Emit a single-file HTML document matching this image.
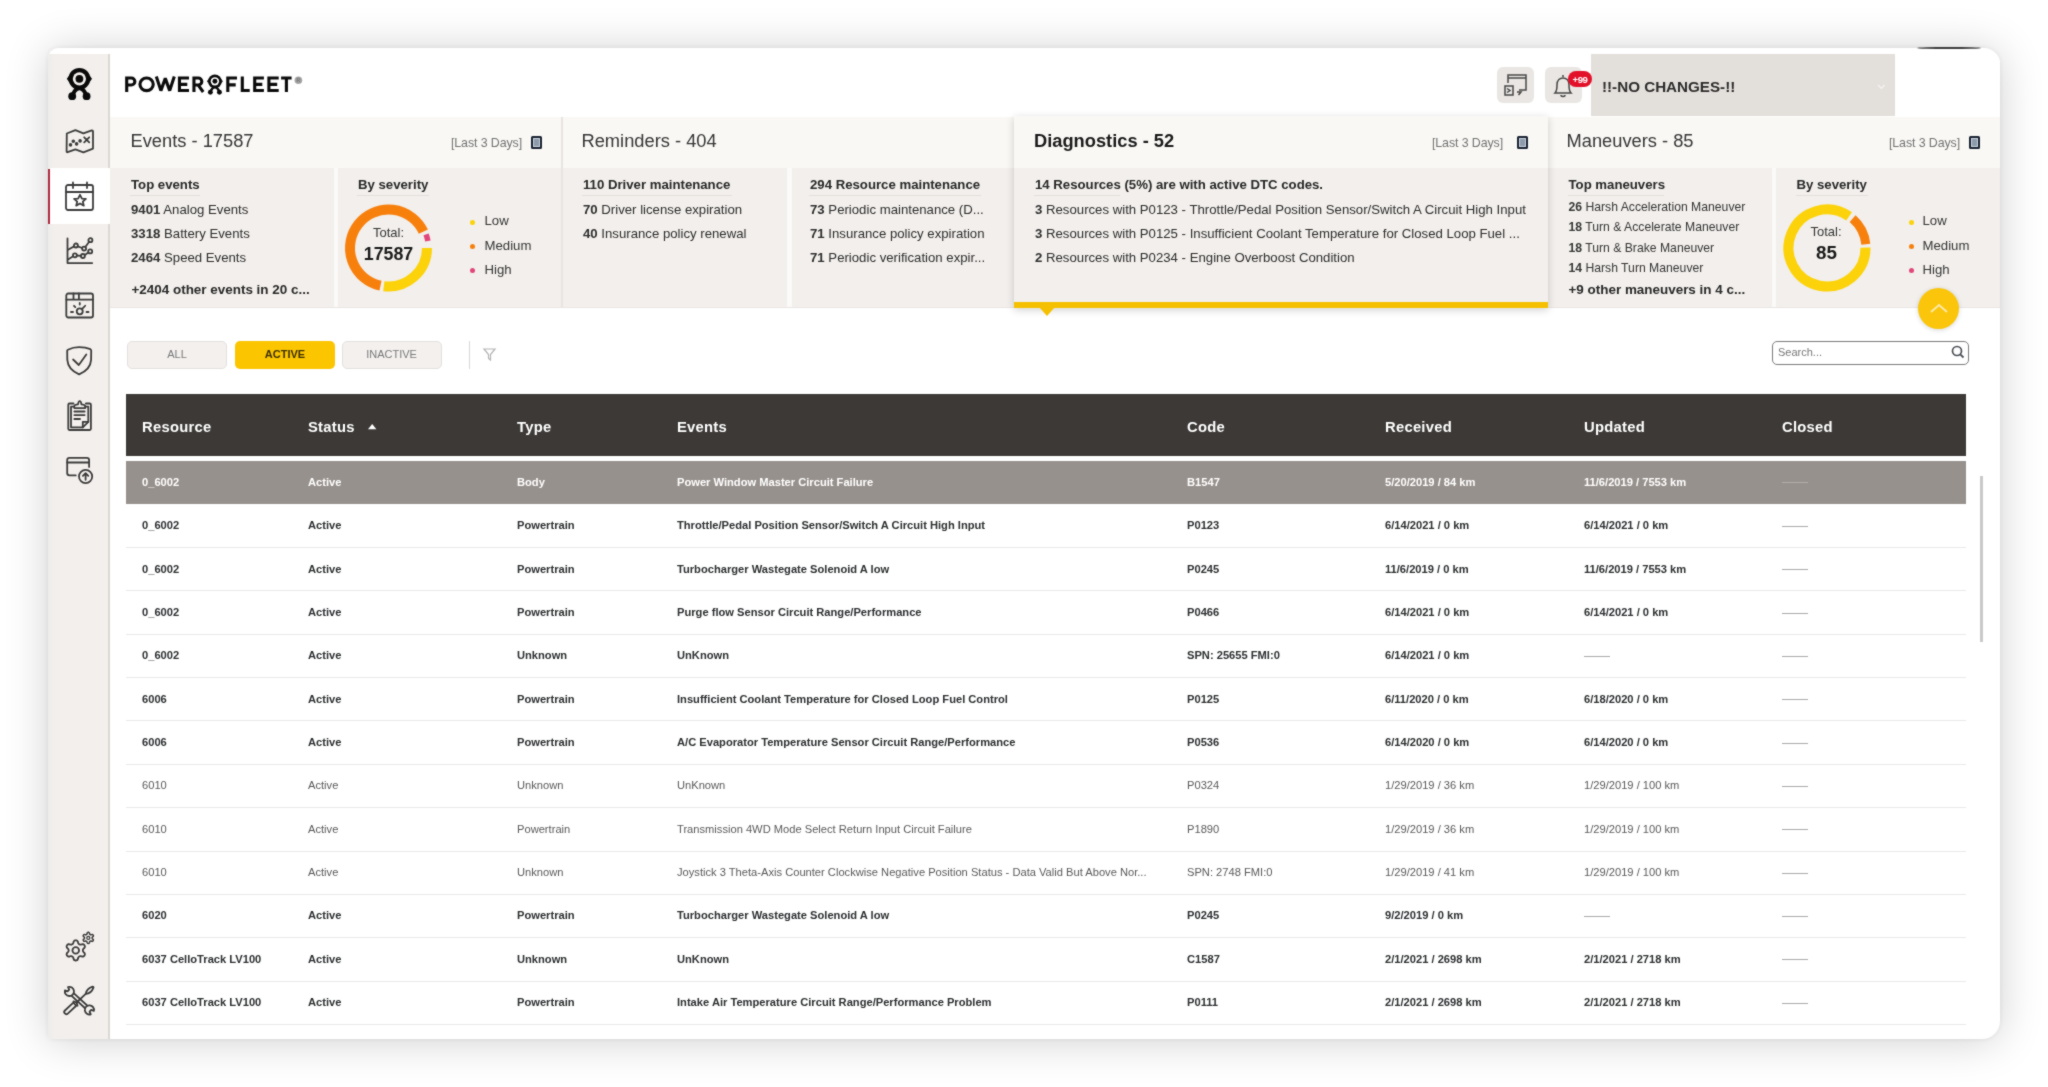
<!DOCTYPE html><html><head><meta charset="utf-8"><style>
html,body{margin:0;padding:0;}
body{width:2048px;height:1087px;overflow:hidden;background:#fff;position:relative;font-family:'Liberation Sans', sans-serif;}
.t{position:absolute;line-height:1;white-space:nowrap;}
.r{position:absolute;}
svg{position:absolute;overflow:visible;}
</style></head><body><svg width="0" height="0" style="position:absolute"><filter id="bl" x="0" y="0" width="100%" height="100%" color-interpolation-filters="sRGB"><feConvolveMatrix order="3" kernelMatrix="1 2 1 2 16 2 1 2 1" divisor="28" edgeMode="duplicate" preserveAlpha="false"/></filter></svg><div id="root" style="position:absolute;left:0;top:0;width:2048px;height:1087px;filter:url(#bl);">
<div class="r" style="left:48px;top:48px;width:1952px;height:991px;border-radius:10px 16px 18px 3px;box-shadow:0 0 6px rgba(0,0,0,0.08), 0 2px 44px rgba(0,0,0,0.19);background:#fff;"></div>
<div class="r" style="left:1917px;top:47.4px;width:64px;height:1.8px;border-radius:50%;background:#3c3c3c;"></div>
<div class="r" style="left:48px;top:48px;width:1952px;height:991px;border-radius:10px 16px 18px 3px;overflow:hidden;">
<div class="r" style="left:-48px;top:-48px;width:2048px;height:1087px;">
<div class="r" style="left:48px;top:54px;width:60px;height:990px;background:#f3efec;"></div>
<div class="r" style="left:48px;top:54px;width:8px;height:990px;background:linear-gradient(90deg,#eeedeb,#f3efec);"></div>
<div class="r" style="left:108px;top:54px;width:2px;height:990px;background:#dcd8d4;"></div>
<div class="r" style="left:50px;top:168px;width:60px;height:56px;background:#fff;"></div>
<div class="r" style="left:48px;top:169px;width:2px;height:55px;background:#b02a3e;"></div>
<div class="r" style="left:110px;top:54px;width:1890px;height:63px;background:#fff;"></div>
<div class="r" style="left:110px;top:117px;width:452px;height:51px;background:#f9f8f5;"></div>
<div class="r" style="left:110px;top:168px;width:452px;height:139px;background:#f2efec;"></div>
<div class="r" style="left:334px;top:168px;width:4px;height:139px;background:#fbfaf8;"></div>
<div class="r" style="left:561px;top:117px;width:2px;height:190px;background:#e7e4e1;"></div>
<div class="r" style="left:563px;top:117px;width:451px;height:51px;background:#f9f8f5;"></div>
<div class="r" style="left:563px;top:168px;width:451px;height:139px;background:#f2efec;"></div>
<div class="r" style="left:787px;top:168px;width:5px;height:139px;background:#fbfaf8;"></div>
<div class="r" style="left:1548px;top:117px;width:452px;height:51px;background:#f9f8f5;"></div>
<div class="r" style="left:1548px;top:168px;width:452px;height:139px;background:#f2efec;"></div>
<div class="r" style="left:1772px;top:168px;width:4px;height:139px;background:#fbfaf8;"></div>
<div class="r" style="left:110px;top:307px;width:904px;height:1px;background:#e8e5e2;"></div>
<div class="r" style="left:1548px;top:307px;width:452px;height:1px;background:#e8e5e2;"></div>
<div class="r" style="left:1014px;top:116px;width:534px;height:192px;background:#f2efec;box-shadow:0 2px 8px rgba(0,0,0,0.18);"></div>
<div class="r" style="left:1014px;top:116px;width:534px;height:52px;background:#f9f8f5;"></div>
<div class="r" style="left:1014px;top:302px;width:534px;height:6px;background:#f5c000;"></div>
<svg style="left:1039px;top:307px" width="16" height="9"><path d="M0 0 L16 0 L8 9 Z" fill="#f5c000"/></svg>
</div></div>
<svg style="left:0;top:0" width="2048" height="200" fill="none" stroke="#0b0b0b" stroke-width="3.1" stroke-linejoin="miter" stroke-miterlimit="2.2">
<path d="M126.7 92 V78.05 H131.35 A3.5 3.5 0 0 1 131.35 85.05 H126.7"/>
<ellipse cx="146.6" cy="84.3" rx="6.65" ry="6.3"/>
<path d="M156.3 76.6 L160.9 90.6 L165.3 78.4 L169.7 90.6 L174.3 76.6" stroke-linejoin="bevel"/>
<path d="M189 78.05 H179.45 V90.55 H189 M179.45 84.4 H187.3"/>
<path d="M193.95 92 V78.05 H198.3 A3.5 3.5 0 0 1 198.3 85.05 H193.95 M198.2 85.2 L203.2 92"/>
<path d="M237 78.05 H227.8 V92 M227.8 84.9 H235.7"/>
<path d="M242.3 76.6 V90.55 H249.7"/>
<path d="M263.9 78.05 H254.7 V90.55 H263.9 M254.7 84.4 H262.3"/>
<path d="M278.7 78.05 H268.9 V90.55 H278.7 M268.9 84.4 H277.2"/>
<path d="M281.1 78.05 H291.6 M286.4 78.05 V92"/>
</svg>
<svg style="left:0;top:0" width="400" height="200"><g transform="translate(214.9,81.3) scale(0.63)">
<circle r="10.9" fill="#0a0a0a"/><path d="M-12.6 0 L-10 -3.6 L-10 3.6 Z M12.6 0 L10 -3.6 L10 3.6 Z" fill="#0a0a0a"/>
<circle r="6.6" fill="#fff"/><circle r="3.9" fill="#0a0a0a"/>
<path d="M-7.2 17.4 Q-4.5 9.5 0 9.5 Q4.5 9.5 7.2 17.4" fill="none" stroke="#0a0a0a" stroke-width="4"/>
<circle cx="-7.2" cy="17.4" r="3.9" fill="#0a0a0a"/><circle cx="7.2" cy="17.4" r="3.9" fill="#0a0a0a"/>
</g></svg>
<svg style="left:0;top:0" width="400" height="200"><g transform="translate(79.4,78.8) scale(1.0)">
<circle r="10.9" fill="#0a0a0a"/><path d="M-12.6 0 L-10 -3.6 L-10 3.6 Z M12.6 0 L10 -3.6 L10 3.6 Z" fill="#0a0a0a"/>
<circle r="6.6" fill="#f3efec"/><circle r="3.9" fill="#0a0a0a"/>
<path d="M-7.2 17.4 Q-4.5 9.5 0 9.5 Q4.5 9.5 7.2 17.4" fill="none" stroke="#0a0a0a" stroke-width="4"/>
<circle cx="-7.2" cy="17.4" r="3.9" fill="#0a0a0a"/><circle cx="7.2" cy="17.4" r="3.9" fill="#0a0a0a"/>
</g></svg>
<svg style="left:294px;top:76px" width="9" height="9"><circle cx="4.4" cy="4.2" r="3.8" fill="#a5a5a5"/><path d="M3.2 6.3 V2.2 H4.7 C6.2 2.2 6.2 4.3 4.7 4.3 H3.2 M4.6 4.3 L6 6.3" fill="none" stroke="#777" stroke-width="0.9"/></svg>
<div class="r" style="left:1497px;top:67px;width:37px;height:36px;border-radius:6px;background:#e9e6e3;"></div>
<div class="r" style="left:1545px;top:67px;width:37px;height:36px;border-radius:6px;background:#e9e6e3;"></div>
<div class="r" style="left:1591px;top:54px;width:304px;height:62px;background:#e3dfdb;"></div>
<div class="t" style="left:1602.00px;top:79.08px;font-size:15.2px;font-weight:700;color:#2c2c2c;">!!-NO CHANGES-!!</div>
<svg style="left:1877px;top:84px" width="9" height="6"><path d="M1 1 L4.3 4.2 L7.6 1" fill="none" stroke="#f4f2f0" stroke-width="1.5"/></svg>
<svg style="left:1503px;top:72px" width="26" height="26" viewBox="0 0 26 26" fill="none" stroke="#474747" stroke-width="1.5">
<path d="M5 11 V3 H23 V18 H16"/><path d="M5 6 H23"/>
<rect x="2" y="14" width="8" height="9"/><path d="M4 16.5 L7 18.5 L4 20.5"/>
<path d="M14 20 H18 L15.5 23"/>
</svg>
<svg style="left:1551px;top:72px" width="26" height="28" viewBox="0 0 26 28" fill="none" stroke="#474747" stroke-width="1.5">
<path d="M12 3 V5"/><path d="M4 21 C6 19 6 17 6 13 C6 8 9 6 12 6 C15 6 18 8 18 13 C18 17 18 19 20 21 Z"/>
<path d="M10 23 C10 25 14 25 14 23"/>
</svg>
<div class="r" style="left:1568px;top:71.3px;width:24px;height:15.5px;border-radius:8px;background:#e3102a;"></div>
<div class="t" style="left:1280.00px;width:600px;text-align:center;top:74.84px;font-size:9.6px;font-weight:700;color:#fff;letter-spacing:-0.4px;">+99</div>
<div class="t" style="left:130.50px;top:132.44px;font-size:18.3px;font-weight:400;color:#363636;">Events - 17587</div>
<div class="t" style="right:1526.00px;top:136.66px;font-size:12.4px;font-weight:400;color:#737373;letter-spacing:-0.1px;">[Last 3 Days]</div><div class="r" style="left:531px;top:135.8px;width:7px;height:9px;border:2px solid #1b2433;border-radius:1.5px;background:#8d9bac;box-shadow:inset 0 0 0 1px #c8d3de;"></div>
<div class="t" style="left:581.50px;top:132.44px;font-size:18.3px;font-weight:400;color:#363636;">Reminders - 404</div>
<div class="t" style="left:1034.00px;top:132.44px;font-size:18.3px;font-weight:700;color:#1a1a1a;">Diagnostics - 52</div>
<div class="t" style="right:545.00px;top:136.66px;font-size:12.4px;font-weight:400;color:#737373;letter-spacing:-0.1px;">[Last 3 Days]</div><div class="r" style="left:1517px;top:135.8px;width:7px;height:9px;border:2px solid #1b2433;border-radius:1.5px;background:#8d9bac;box-shadow:inset 0 0 0 1px #c8d3de;"></div>
<div class="t" style="left:1566.50px;top:132.44px;font-size:18.3px;font-weight:400;color:#363636;">Maneuvers - 85</div>
<div class="t" style="right:88.00px;top:136.66px;font-size:12.4px;font-weight:400;color:#737373;letter-spacing:-0.1px;">[Last 3 Days]</div><div class="r" style="left:1969px;top:135.8px;width:7px;height:9px;border:2px solid #1b2433;border-radius:1.5px;background:#8d9bac;box-shadow:inset 0 0 0 1px #c8d3de;"></div>
<div class="t" style="left:131.00px;top:178.48px;font-size:13.2px;font-weight:700;color:#282828;">Top events</div>
<div class="r" style="left:130px;top:195px;width:70px;height:1px;background:#e2dfdb;"></div>
<div class="t" style="left:131.00px;top:203.08px;font-size:13.2px;font-weight:400;color:#2e2e2e;"><b>9401</b> Analog Events</div>
<div class="t" style="left:131.00px;top:227.28px;font-size:13.2px;font-weight:400;color:#2e2e2e;"><b>3318</b> Battery Events</div>
<div class="t" style="left:131.00px;top:251.48px;font-size:13.2px;font-weight:400;color:#2e2e2e;"><b>2464</b> Speed Events</div>
<div class="t" style="left:131.50px;top:282.77px;font-size:13.45px;font-weight:700;color:#282828;">+2404 other events in 20 c...</div>
<div class="t" style="left:358.00px;top:178.48px;font-size:13.2px;font-weight:700;color:#282828;">By severity</div>
<div class="r" style="left:357px;top:195px;width:72px;height:1px;background:#e2dfdb;"></div>
<div class="t" style="left:583.00px;top:178.48px;font-size:13.2px;font-weight:700;color:#282828;">110 Driver maintenance</div>
<div class="r" style="left:582px;top:195px;width:150px;height:1px;background:#e2dfdb;"></div>
<div class="t" style="left:583.00px;top:203.08px;font-size:13.2px;font-weight:400;color:#2e2e2e;"><b>70</b> Driver license expiration</div>
<div class="t" style="left:583.00px;top:227.28px;font-size:13.2px;font-weight:400;color:#2e2e2e;"><b>40</b> Insurance policy renewal</div>
<div class="t" style="left:810.00px;top:178.48px;font-size:13.2px;font-weight:700;color:#282828;">294 Resource maintenance</div>
<div class="r" style="left:809px;top:195px;width:172px;height:1px;background:#e2dfdb;"></div>
<div class="t" style="left:810.00px;top:203.08px;font-size:13.2px;font-weight:400;color:#2e2e2e;"><b>73</b> Periodic maintenance (D...</div>
<div class="t" style="left:810.00px;top:227.28px;font-size:13.2px;font-weight:400;color:#2e2e2e;"><b>71</b> Insurance policy expiration</div>
<div class="t" style="left:810.00px;top:251.48px;font-size:13.2px;font-weight:400;color:#2e2e2e;"><b>71</b> Periodic verification expir...</div>
<div class="t" style="left:1035.00px;top:178.48px;font-size:13.2px;font-weight:700;color:#282828;">14 Resources (5%) are with active DTC codes.</div>
<div class="r" style="left:1034px;top:195px;width:86px;height:1px;background:#e2dfdb;"></div>
<div class="t" style="left:1035.00px;top:203.08px;font-size:13.2px;font-weight:400;color:#2e2e2e;"><b>3</b> Resources with P0123 - Throttle/Pedal Position Sensor/Switch A Circuit High Input</div>
<div class="t" style="left:1035.00px;top:227.28px;font-size:13.2px;font-weight:400;color:#2e2e2e;"><b>3</b> Resources with P0125 - Insufficient Coolant Temperature for Closed Loop Fuel ...</div>
<div class="t" style="left:1035.00px;top:251.48px;font-size:13.2px;font-weight:400;color:#2e2e2e;"><b>2</b> Resources with P0234 - Engine Overboost Condition</div>
<div class="t" style="left:1568.50px;top:178.48px;font-size:13.2px;font-weight:700;color:#282828;">Top maneuvers</div>
<div class="r" style="left:1568px;top:195px;width:96px;height:1px;background:#e2dfdb;"></div>
<div class="t" style="left:1568.50px;top:200.63px;font-size:12.2px;font-weight:400;color:#363636;"><b>26</b> Harsh Acceleration Maneuver</div>
<div class="t" style="left:1568.50px;top:221.23px;font-size:12.2px;font-weight:400;color:#363636;"><b>18</b> Turn &amp; Accelerate Maneuver</div>
<div class="t" style="left:1568.50px;top:241.83px;font-size:12.2px;font-weight:400;color:#363636;"><b>18</b> Turn &amp; Brake Maneuver</div>
<div class="t" style="left:1568.50px;top:262.43px;font-size:12.2px;font-weight:400;color:#363636;"><b>14</b> Harsh Turn Maneuver</div>
<div class="t" style="left:1568.50px;top:282.77px;font-size:13.45px;font-weight:700;color:#282828;">+9 other maneuvers in 4 c...</div>
<div class="t" style="left:1796.50px;top:178.48px;font-size:13.2px;font-weight:700;color:#282828;">By severity</div>
<div class="r" style="left:1796px;top:195px;width:72px;height:1px;background:#e2dfdb;"></div>
<svg style="left:0;top:0" width="2048" height="1087"><path d="M380.50 285.66 A38.5 38.5 0 1 1 423.39 231.73" fill="none" stroke="#f7800d" stroke-width="10"/><path d="M427.00 248.00 A38.5 38.5 0 0 1 383.81 286.21" fill="none" stroke="#fcd20a" stroke-width="10"/></svg>
<svg style="left:0;top:0" width="2048" height="1087"><path d="M426.09 234.32 A40 40 0 0 1 427.89 241.05" fill="none" stroke="#e2457a" stroke-width="5.5"/></svg>
<div class="t" style="left:88.50px;width:600px;text-align:center;top:225.95px;font-size:13px;font-weight:400;color:#363636;">Total:</div>
<div class="t" style="left:88.50px;width:600px;text-align:center;top:246.17px;font-size:17.8px;font-weight:700;color:#1a1a1a;">17587</div>
<svg style="left:0;top:0" width="2048" height="1087"><path d="M1865.50 247.66 A38.5 38.5 0 1 1 1849.08 216.46" fill="none" stroke="#fcd20a" stroke-width="10"/></svg>
<svg style="left:0;top:0" width="2048" height="1087"><path d="M1852.59 218.57 A39 39 0 0 1 1865.82 244.26" fill="none" stroke="#f7800d" stroke-width="9"/></svg>
<div class="t" style="left:1526.00px;width:600px;text-align:center;top:225.45px;font-size:13px;font-weight:400;color:#363636;">Total:</div>
<div class="t" style="left:1526.50px;width:600px;text-align:center;top:244.32px;font-size:18.8px;font-weight:700;color:#1a1a1a;">85</div>
<div class="r" style="left:470.0px;top:219.5px;width:5px;height:5px;border-radius:50%;background:#fcd20a;"></div><div class="t" style="left:484.50px;top:214.48px;font-size:13.2px;font-weight:400;color:#363636;">Low</div><div class="r" style="left:470.0px;top:243.8px;width:5px;height:5px;border-radius:50%;background:#f7800d;"></div><div class="t" style="left:484.50px;top:238.78px;font-size:13.2px;font-weight:400;color:#363636;">Medium</div><div class="r" style="left:470.0px;top:268.1px;width:5px;height:5px;border-radius:50%;background:#e2457a;"></div><div class="t" style="left:484.50px;top:263.08px;font-size:13.2px;font-weight:400;color:#363636;">High</div>
<div class="r" style="left:1908.5px;top:219.5px;width:5px;height:5px;border-radius:50%;background:#fcd20a;"></div><div class="t" style="left:1922.50px;top:214.48px;font-size:13.2px;font-weight:400;color:#363636;">Low</div><div class="r" style="left:1908.5px;top:243.8px;width:5px;height:5px;border-radius:50%;background:#f7800d;"></div><div class="t" style="left:1922.50px;top:238.78px;font-size:13.2px;font-weight:400;color:#363636;">Medium</div><div class="r" style="left:1908.5px;top:268.1px;width:5px;height:5px;border-radius:50%;background:#e2457a;"></div><div class="t" style="left:1922.50px;top:263.08px;font-size:13.2px;font-weight:400;color:#363636;">High</div>
<div class="r" style="left:1918px;top:288px;width:41px;height:41px;border-radius:50%;background:#fac50a;box-shadow:0 1px 5px rgba(0,0,0,0.16);"></div>
<svg style="left:1929px;top:302px" width="20" height="12"><path d="M2 10 L10 3 L18 10" fill="none" stroke="#fde9a8" stroke-width="2"/></svg>
<div class="r" style="left:127px;top:341px;width:98px;height:26px;border-radius:5px;background:#f3f0ee;border:1px solid #e3e0de;"></div>
<div class="r" style="left:235px;top:341px;width:100px;height:28px;border-radius:5px;background:#fbc500;"></div>
<div class="r" style="left:342px;top:341px;width:98px;height:26px;border-radius:5px;background:#f3f0ee;border:1px solid #e3e0de;"></div>
<div class="t" style="left:-123.00px;width:600px;text-align:center;top:348.95px;font-size:11px;font-weight:400;color:#7a7a7a;">ALL</div>
<div class="t" style="left:-15.00px;width:600px;text-align:center;top:348.95px;font-size:11px;font-weight:700;color:#3d3000;">ACTIVE</div>
<div class="t" style="left:91.50px;width:600px;text-align:center;top:348.95px;font-size:11px;font-weight:400;color:#7a7a7a;">INACTIVE</div>
<div class="r" style="left:469px;top:341px;width:1px;height:28px;background:#d8d8d8;"></div>
<svg style="left:483px;top:348px" width="13" height="13"><path d="M1 1 H12 L7.5 6.5 V12 L5.5 10.5 V6.5 Z" fill="none" stroke="#b3b3b3" stroke-width="1.2"/></svg>
<div class="r" style="left:1772px;top:341px;width:195px;height:22px;border-radius:5px;border:1.8px solid #7c7c7c;background:#fff;"></div>
<div class="t" style="left:1778.00px;top:347.15px;font-size:11px;font-weight:400;color:#777;">Search...</div>
<svg style="left:1951px;top:345px" width="14" height="14"><circle cx="6" cy="6" r="4.5" fill="none" stroke="#4a4f55" stroke-width="1.7"/><path d="M9.3 9.3 L12.5 12.5" stroke="#4a4f55" stroke-width="1.8"/></svg>
<div class="r" style="left:126px;top:393.5px;width:1840px;height:62.5px;background:#3d3937;"></div>
<div class="t" style="left:142.00px;top:419.92px;font-size:14.8px;font-weight:700;color:#fff;letter-spacing:0.25px;">Resource</div>
<div class="t" style="left:308.00px;top:419.92px;font-size:14.8px;font-weight:700;color:#fff;letter-spacing:0.25px;">Status</div>
<div class="t" style="left:517.00px;top:419.92px;font-size:14.8px;font-weight:700;color:#fff;letter-spacing:0.25px;">Type</div>
<div class="t" style="left:677.00px;top:419.92px;font-size:14.8px;font-weight:700;color:#fff;letter-spacing:0.25px;">Events</div>
<div class="t" style="left:1187.00px;top:419.92px;font-size:14.8px;font-weight:700;color:#fff;letter-spacing:0.25px;">Code</div>
<div class="t" style="left:1385.00px;top:419.92px;font-size:14.8px;font-weight:700;color:#fff;letter-spacing:0.25px;">Received</div>
<div class="t" style="left:1584.00px;top:419.92px;font-size:14.8px;font-weight:700;color:#fff;letter-spacing:0.25px;">Updated</div>
<div class="t" style="left:1782.00px;top:419.92px;font-size:14.8px;font-weight:700;color:#fff;letter-spacing:0.25px;">Closed</div>
<svg style="left:367.5px;top:423.5px" width="9" height="6"><path d="M0 5.2 L4.2 0 L8.4 5.2 Z" fill="#fff"/></svg>
<div class="r" style="left:126px;top:461px;width:1840px;height:43px;background:#97918d;"></div>
<div class="t" style="left:142.00px;top:476.92px;font-size:11.15px;font-weight:700;color:#ffffff;">0_6002</div>
<div class="t" style="left:308.00px;top:476.92px;font-size:11.15px;font-weight:700;color:#ffffff;">Active</div>
<div class="t" style="left:517.00px;top:476.92px;font-size:11.15px;font-weight:700;color:#ffffff;">Body</div>
<div class="t" style="left:677.00px;top:476.92px;font-size:11.15px;font-weight:700;color:#ffffff;">Power Window Master Circuit Failure</div>
<div class="t" style="left:1187.00px;top:476.92px;font-size:11.15px;font-weight:700;color:#ffffff;">B1547</div>
<div class="t" style="left:1385.00px;top:476.92px;font-size:11.15px;font-weight:700;color:#ffffff;">5/20/2019 / 84 km</div>
<div class="t" style="left:1584.00px;top:476.92px;font-size:11.15px;font-weight:700;color:#ffffff;">11/6/2019 / 7553 km</div>
<div class="r" style="left:1782px;top:481.5px;width:26px;height:1.5px;background:#b3ada9;"></div>
<div class="t" style="left:142.00px;top:520.24px;font-size:11.15px;font-weight:700;color:#2c2f30;">0_6002</div>
<div class="t" style="left:308.00px;top:520.24px;font-size:11.15px;font-weight:700;color:#2c2f30;">Active</div>
<div class="t" style="left:517.00px;top:520.24px;font-size:11.15px;font-weight:700;color:#2c2f30;">Powertrain</div>
<div class="t" style="left:677.00px;top:520.24px;font-size:11.15px;font-weight:700;color:#2c2f30;">Throttle/Pedal Position Sensor/Switch A Circuit High Input</div>
<div class="t" style="left:1187.00px;top:520.24px;font-size:11.15px;font-weight:700;color:#2c2f30;">P0123</div>
<div class="t" style="left:1385.00px;top:520.24px;font-size:11.15px;font-weight:700;color:#2c2f30;">6/14/2021 / 0 km</div>
<div class="t" style="left:1584.00px;top:520.24px;font-size:11.15px;font-weight:700;color:#2c2f30;">6/14/2021 / 0 km</div>
<div class="r" style="left:1782px;top:525.5px;width:26px;height:1.5px;background:#aaa;"></div>
<div class="r" style="left:126px;top:547.00px;width:1840px;height:1px;background:#e9e9e9;"></div>
<div class="t" style="left:142.00px;top:563.60px;font-size:11.15px;font-weight:700;color:#2c2f30;">0_6002</div>
<div class="t" style="left:308.00px;top:563.60px;font-size:11.15px;font-weight:700;color:#2c2f30;">Active</div>
<div class="t" style="left:517.00px;top:563.60px;font-size:11.15px;font-weight:700;color:#2c2f30;">Powertrain</div>
<div class="t" style="left:677.00px;top:563.60px;font-size:11.15px;font-weight:700;color:#2c2f30;">Turbocharger Wastegate Solenoid A low</div>
<div class="t" style="left:1187.00px;top:563.60px;font-size:11.15px;font-weight:700;color:#2c2f30;">P0245</div>
<div class="t" style="left:1385.00px;top:563.60px;font-size:11.15px;font-weight:700;color:#2c2f30;">11/6/2019 / 0 km</div>
<div class="t" style="left:1584.00px;top:563.60px;font-size:11.15px;font-weight:700;color:#2c2f30;">11/6/2019 / 7553 km</div>
<div class="r" style="left:1782px;top:568.5px;width:26px;height:1.5px;background:#aaa;"></div>
<div class="r" style="left:126px;top:590.36px;width:1840px;height:1px;background:#e9e9e9;"></div>
<div class="t" style="left:142.00px;top:606.96px;font-size:11.15px;font-weight:700;color:#2c2f30;">0_6002</div>
<div class="t" style="left:308.00px;top:606.96px;font-size:11.15px;font-weight:700;color:#2c2f30;">Active</div>
<div class="t" style="left:517.00px;top:606.96px;font-size:11.15px;font-weight:700;color:#2c2f30;">Powertrain</div>
<div class="t" style="left:677.00px;top:606.96px;font-size:11.15px;font-weight:700;color:#2c2f30;">Purge flow Sensor Circuit Range/Performance</div>
<div class="t" style="left:1187.00px;top:606.96px;font-size:11.15px;font-weight:700;color:#2c2f30;">P0466</div>
<div class="t" style="left:1385.00px;top:606.96px;font-size:11.15px;font-weight:700;color:#2c2f30;">6/14/2021 / 0 km</div>
<div class="t" style="left:1584.00px;top:606.96px;font-size:11.15px;font-weight:700;color:#2c2f30;">6/14/2021 / 0 km</div>
<div class="r" style="left:1782px;top:612.5px;width:26px;height:1.5px;background:#aaa;"></div>
<div class="r" style="left:126px;top:633.72px;width:1840px;height:1px;background:#e9e9e9;"></div>
<div class="t" style="left:142.00px;top:650.32px;font-size:11.15px;font-weight:700;color:#2c2f30;">0_6002</div>
<div class="t" style="left:308.00px;top:650.32px;font-size:11.15px;font-weight:700;color:#2c2f30;">Active</div>
<div class="t" style="left:517.00px;top:650.32px;font-size:11.15px;font-weight:700;color:#2c2f30;">Unknown</div>
<div class="t" style="left:677.00px;top:650.32px;font-size:11.15px;font-weight:700;color:#2c2f30;">UnKnown</div>
<div class="t" style="left:1187.00px;top:650.32px;font-size:11.15px;font-weight:700;color:#2c2f30;">SPN: 25655 FMI:0</div>
<div class="t" style="left:1385.00px;top:650.32px;font-size:11.15px;font-weight:700;color:#2c2f30;">6/14/2021 / 0 km</div>
<div class="r" style="left:1584px;top:655.5px;width:26px;height:1.5px;background:#aaa;"></div>
<div class="r" style="left:1782px;top:655.5px;width:26px;height:1.5px;background:#aaa;"></div>
<div class="r" style="left:126px;top:677.08px;width:1840px;height:1px;background:#e9e9e9;"></div>
<div class="t" style="left:142.00px;top:693.68px;font-size:11.15px;font-weight:700;color:#2c2f30;">6006</div>
<div class="t" style="left:308.00px;top:693.68px;font-size:11.15px;font-weight:700;color:#2c2f30;">Active</div>
<div class="t" style="left:517.00px;top:693.68px;font-size:11.15px;font-weight:700;color:#2c2f30;">Powertrain</div>
<div class="t" style="left:677.00px;top:693.68px;font-size:11.15px;font-weight:700;color:#2c2f30;">Insufficient Coolant Temperature for Closed Loop Fuel Control</div>
<div class="t" style="left:1187.00px;top:693.68px;font-size:11.15px;font-weight:700;color:#2c2f30;">P0125</div>
<div class="t" style="left:1385.00px;top:693.68px;font-size:11.15px;font-weight:700;color:#2c2f30;">6/11/2020 / 0 km</div>
<div class="t" style="left:1584.00px;top:693.68px;font-size:11.15px;font-weight:700;color:#2c2f30;">6/18/2020 / 0 km</div>
<div class="r" style="left:1782px;top:698.5px;width:26px;height:1.5px;background:#aaa;"></div>
<div class="r" style="left:126px;top:720.44px;width:1840px;height:1px;background:#e9e9e9;"></div>
<div class="t" style="left:142.00px;top:737.04px;font-size:11.15px;font-weight:700;color:#2c2f30;">6006</div>
<div class="t" style="left:308.00px;top:737.04px;font-size:11.15px;font-weight:700;color:#2c2f30;">Active</div>
<div class="t" style="left:517.00px;top:737.04px;font-size:11.15px;font-weight:700;color:#2c2f30;">Powertrain</div>
<div class="t" style="left:677.00px;top:737.04px;font-size:11.15px;font-weight:700;color:#2c2f30;">A/C Evaporator Temperature Sensor Circuit Range/Performance</div>
<div class="t" style="left:1187.00px;top:737.04px;font-size:11.15px;font-weight:700;color:#2c2f30;">P0536</div>
<div class="t" style="left:1385.00px;top:737.04px;font-size:11.15px;font-weight:700;color:#2c2f30;">6/14/2020 / 0 km</div>
<div class="t" style="left:1584.00px;top:737.04px;font-size:11.15px;font-weight:700;color:#2c2f30;">6/14/2020 / 0 km</div>
<div class="r" style="left:1782px;top:742.5px;width:26px;height:1.5px;background:#aaa;"></div>
<div class="r" style="left:126px;top:763.80px;width:1840px;height:1px;background:#e9e9e9;"></div>
<div class="t" style="left:142.00px;top:780.40px;font-size:11.15px;font-weight:400;color:#5a5a5a;">6010</div>
<div class="t" style="left:308.00px;top:780.40px;font-size:11.15px;font-weight:400;color:#5a5a5a;">Active</div>
<div class="t" style="left:517.00px;top:780.40px;font-size:11.15px;font-weight:400;color:#5a5a5a;">Unknown</div>
<div class="t" style="left:677.00px;top:780.40px;font-size:11.15px;font-weight:400;color:#5a5a5a;">UnKnown</div>
<div class="t" style="left:1187.00px;top:780.40px;font-size:11.15px;font-weight:400;color:#5a5a5a;">P0324</div>
<div class="t" style="left:1385.00px;top:780.40px;font-size:11.15px;font-weight:400;color:#5a5a5a;">1/29/2019 / 36 km</div>
<div class="t" style="left:1584.00px;top:780.40px;font-size:11.15px;font-weight:400;color:#5a5a5a;">1/29/2019 / 100 km</div>
<div class="r" style="left:1782px;top:785.5px;width:26px;height:1.5px;background:#aaa;"></div>
<div class="r" style="left:126px;top:807.16px;width:1840px;height:1px;background:#e9e9e9;"></div>
<div class="t" style="left:142.00px;top:823.76px;font-size:11.15px;font-weight:400;color:#5a5a5a;">6010</div>
<div class="t" style="left:308.00px;top:823.76px;font-size:11.15px;font-weight:400;color:#5a5a5a;">Active</div>
<div class="t" style="left:517.00px;top:823.76px;font-size:11.15px;font-weight:400;color:#5a5a5a;">Powertrain</div>
<div class="t" style="left:677.00px;top:823.76px;font-size:11.15px;font-weight:400;color:#5a5a5a;">Transmission 4WD Mode Select Return Input Circuit Failure</div>
<div class="t" style="left:1187.00px;top:823.76px;font-size:11.15px;font-weight:400;color:#5a5a5a;">P1890</div>
<div class="t" style="left:1385.00px;top:823.76px;font-size:11.15px;font-weight:400;color:#5a5a5a;">1/29/2019 / 36 km</div>
<div class="t" style="left:1584.00px;top:823.76px;font-size:11.15px;font-weight:400;color:#5a5a5a;">1/29/2019 / 100 km</div>
<div class="r" style="left:1782px;top:828.5px;width:26px;height:1.5px;background:#aaa;"></div>
<div class="r" style="left:126px;top:850.52px;width:1840px;height:1px;background:#e9e9e9;"></div>
<div class="t" style="left:142.00px;top:867.12px;font-size:11.15px;font-weight:400;color:#5a5a5a;">6010</div>
<div class="t" style="left:308.00px;top:867.12px;font-size:11.15px;font-weight:400;color:#5a5a5a;">Active</div>
<div class="t" style="left:517.00px;top:867.12px;font-size:11.15px;font-weight:400;color:#5a5a5a;">Unknown</div>
<div class="t" style="left:677.00px;top:867.12px;font-size:11.15px;font-weight:400;color:#5a5a5a;">Joystick 3 Theta-Axis Counter Clockwise Negative Position Status - Data Valid But Above Nor...</div>
<div class="t" style="left:1187.00px;top:867.12px;font-size:11.15px;font-weight:400;color:#5a5a5a;">SPN: 2748 FMI:0</div>
<div class="t" style="left:1385.00px;top:867.12px;font-size:11.15px;font-weight:400;color:#5a5a5a;">1/29/2019 / 41 km</div>
<div class="t" style="left:1584.00px;top:867.12px;font-size:11.15px;font-weight:400;color:#5a5a5a;">1/29/2019 / 100 km</div>
<div class="r" style="left:1782px;top:872.5px;width:26px;height:1.5px;background:#aaa;"></div>
<div class="r" style="left:126px;top:893.88px;width:1840px;height:1px;background:#e9e9e9;"></div>
<div class="t" style="left:142.00px;top:910.48px;font-size:11.15px;font-weight:700;color:#2c2f30;">6020</div>
<div class="t" style="left:308.00px;top:910.48px;font-size:11.15px;font-weight:700;color:#2c2f30;">Active</div>
<div class="t" style="left:517.00px;top:910.48px;font-size:11.15px;font-weight:700;color:#2c2f30;">Powertrain</div>
<div class="t" style="left:677.00px;top:910.48px;font-size:11.15px;font-weight:700;color:#2c2f30;">Turbocharger Wastegate Solenoid A low</div>
<div class="t" style="left:1187.00px;top:910.48px;font-size:11.15px;font-weight:700;color:#2c2f30;">P0245</div>
<div class="t" style="left:1385.00px;top:910.48px;font-size:11.15px;font-weight:700;color:#2c2f30;">9/2/2019 / 0 km</div>
<div class="r" style="left:1584px;top:915.5px;width:26px;height:1.5px;background:#aaa;"></div>
<div class="r" style="left:1782px;top:915.5px;width:26px;height:1.5px;background:#aaa;"></div>
<div class="r" style="left:126px;top:937.24px;width:1840px;height:1px;background:#e9e9e9;"></div>
<div class="t" style="left:142.00px;top:953.84px;font-size:11.15px;font-weight:700;color:#2c2f30;">6037 CelloTrack LV100</div>
<div class="t" style="left:308.00px;top:953.84px;font-size:11.15px;font-weight:700;color:#2c2f30;">Active</div>
<div class="t" style="left:517.00px;top:953.84px;font-size:11.15px;font-weight:700;color:#2c2f30;">Unknown</div>
<div class="t" style="left:677.00px;top:953.84px;font-size:11.15px;font-weight:700;color:#2c2f30;">UnKnown</div>
<div class="t" style="left:1187.00px;top:953.84px;font-size:11.15px;font-weight:700;color:#2c2f30;">C1587</div>
<div class="t" style="left:1385.00px;top:953.84px;font-size:11.15px;font-weight:700;color:#2c2f30;">2/1/2021 / 2698 km</div>
<div class="t" style="left:1584.00px;top:953.84px;font-size:11.15px;font-weight:700;color:#2c2f30;">2/1/2021 / 2718 km</div>
<div class="r" style="left:1782px;top:958.5px;width:26px;height:1.5px;background:#aaa;"></div>
<div class="r" style="left:126px;top:980.60px;width:1840px;height:1px;background:#e9e9e9;"></div>
<div class="t" style="left:142.00px;top:997.20px;font-size:11.15px;font-weight:700;color:#2c2f30;">6037 CelloTrack LV100</div>
<div class="t" style="left:308.00px;top:997.20px;font-size:11.15px;font-weight:700;color:#2c2f30;">Active</div>
<div class="t" style="left:517.00px;top:997.20px;font-size:11.15px;font-weight:700;color:#2c2f30;">Powertrain</div>
<div class="t" style="left:677.00px;top:997.20px;font-size:11.15px;font-weight:700;color:#2c2f30;">Intake Air Temperature Circuit Range/Performance Problem</div>
<div class="t" style="left:1187.00px;top:997.20px;font-size:11.15px;font-weight:700;color:#2c2f30;">P0111</div>
<div class="t" style="left:1385.00px;top:997.20px;font-size:11.15px;font-weight:700;color:#2c2f30;">2/1/2021 / 2698 km</div>
<div class="t" style="left:1584.00px;top:997.20px;font-size:11.15px;font-weight:700;color:#2c2f30;">2/1/2021 / 2718 km</div>
<div class="r" style="left:1782px;top:1002.5px;width:26px;height:1.5px;background:#aaa;"></div>
<div class="r" style="left:126px;top:1023.96px;width:1840px;height:1px;background:#e9e9e9;"></div>
<div class="r" style="left:1980px;top:476px;width:3px;height:166px;background:#c9c9c9;"></div>

<svg style="left:64px;top:127px" width="32" height="30" viewBox="0 0 32 30" fill="none" stroke="#3c3c3c" stroke-width="1.8" stroke-linecap="round" stroke-linejoin="round">
<path d="M2.8 6.5 L11.4 3.2 L19.4 6.3 L27.8 3.3 Q29 3.2 29 4.6 L29 21.6 L19.4 25.3 L11.4 22.4 L3.6 25.2 Q2.5 25.4 2.6 24 Z"/>
<circle cx="6.5" cy="17.9" r="0.9" fill="#3c3c3c"/><circle cx="9.3" cy="14.2" r="0.9" fill="#3c3c3c"/><circle cx="12.6" cy="16.9" r="0.9" fill="#3c3c3c"/><circle cx="16.1" cy="13.9" r="0.9" fill="#3c3c3c"/>
<path d="M20.2 10.3 L25.2 15.3 M25.2 10.3 L20.2 15.3"/>
</svg>
<svg style="left:64px;top:181px" width="31" height="31" viewBox="0 0 31 31" fill="none" stroke="#3c3c3c" stroke-width="1.8" stroke-linecap="round" stroke-linejoin="round">
<rect x="2" y="4" width="27" height="25" rx="2"/><path d="M2 11 H29"/><path d="M9 1.5 V7 M23 1.5 V7"/>
<path d="M16 13.8 L17.9 17.6 L21.9 17.9 L18.8 20.6 L19.8 24.6 L16 22.5 L12.2 24.6 L13.2 20.6 L10.1 17.9 L14.1 17.6 Z"/>
</svg>
<svg style="left:64px;top:235px" width="31" height="31" viewBox="0 0 31 31" fill="none" stroke="#3c3c3c" stroke-width="1.8" stroke-linecap="round" stroke-linejoin="round">
<path d="M3.5 3.5 V28.1 H28.2"/>
<path d="M4 14.8 L10.1 11.4 M13.6 11.3 L18.3 13 M21.3 12 L25.2 6.8"/><path d="M4 24.6 L9.2 21.3 M12.8 20.5 L16.9 20.8 M20.8 20.1 L24.4 17.5"/>
<circle cx="11.9" cy="10.5" r="2"/><circle cx="20.1" cy="13.6" r="2"/><circle cx="26.4" cy="5.2" r="2"/>
<circle cx="10.9" cy="20.3" r="2"/><circle cx="18.9" cy="21" r="2"/><circle cx="26.2" cy="16.4" r="2"/>
</svg>
<svg style="left:64px;top:290px" width="31" height="31" viewBox="0 0 31 31" fill="none" stroke="#3c3c3c" stroke-width="1.8" stroke-linecap="round" stroke-linejoin="round">
<rect x="2.3" y="3.5" width="26.7" height="24" rx="2"/><path d="M2.3 9.6 H29 M9.5 3.5 V9.6 M14.9 3.5 V9.6"/>
<circle cx="15.75" cy="21.35" r="3"/><path d="M17.9 19.2 L21.2 15.75"/>
<path d="M7 22 H9 M22.5 22 H24.5 M10 15.8 L11.3 17.1 M15.75 13 V14.6"/>
</svg>
<svg style="left:64px;top:344px" width="31" height="33" viewBox="0 0 31 33" fill="none" stroke="#3c3c3c" stroke-width="1.8" stroke-linecap="round" stroke-linejoin="round">
<path d="M3.9 5.75 Q9 3.2 15.1 3.2 Q21.5 3.2 26.4 5.2 Q27.2 5.6 27.2 6.6 L27.1 15.9 Q26.5 25.5 15.1 30.4 Q4 25.5 3.3 15.9 L3.2 6.8 Q3.2 6.1 3.9 5.75 Z"/>
<path d="M9.1 15.5 L14.8 21 L22.3 10.5"/>
</svg>
<svg style="left:64px;top:399px" width="31" height="33" viewBox="0 0 31 33" fill="none" stroke="#3c3c3c" stroke-width="1.8" stroke-linecap="round" stroke-linejoin="round">
<path d="M9.5 4.5 H5.5 Q4.3 4.5 4.3 5.7 V29.8 Q4.3 31 5.5 31 H25.7 Q26.9 31 26.9 29.8 V5.7 Q26.9 4.5 25.7 4.5 H21.9"/>
<path d="M10 7.7 H7 V28.3 H18.8 L24.3 22.8 V7.7 H21.4"/>
<path d="M10.3 9.1 V7 Q10.3 6 12.5 5.6 L14 5.3 Q14.5 2.2 15.7 2.2 Q17 2.2 17.4 5.3 L19 5.6 Q21.2 6 21.2 7 V9.1 Z"/>
<path d="M10.35 12.5 H20.65 M10.35 16.1 H20.65 M10.35 20 H16"/>
<path d="M18.8 28.3 V22.8 H24.3"/>
</svg>
<svg style="left:64px;top:454px" width="32" height="32" viewBox="0 0 32 32" fill="none" stroke="#3c3c3c" stroke-width="1.8" stroke-linecap="round" stroke-linejoin="round">
<path d="M11.8 21.4 H5.5 Q3.2 21.4 3.2 19.1 V6.2 Q3.2 3.9 5.5 3.9 H22.8 Q25.1 3.9 25.1 6.2 V12.9"/>
<path d="M3.2 8.5 H25.1"/>
<circle cx="21.6" cy="22.5" r="6.6"/><path d="M21.6 25.8 V19.4 M18.9 21.9 L21.6 19.2 L24.3 21.9"/>
</svg>
<svg style="left:63px;top:930px" width="34" height="34" viewBox="0 0 34 34" fill="none" stroke="#3c3c3c" stroke-width="1.8" stroke-linecap="round" stroke-linejoin="round">
<path d="M12.8 10.3 L13.4 10.4 L14.0 10.6 L14.6 11.1 L15.0 12.1 L15.2 13.1 L15.5 13.7 L15.9 14.0 L16.3 14.3 L16.7 14.5 L17.2 14.6 L17.8 14.6 L18.8 14.3 L19.9 14.1 L20.6 14.4 L21.1 14.8 L21.5 15.3 L21.8 15.9 L21.9 16.6 L21.7 17.4 L21.1 18.2 L20.3 18.9 L20.0 19.4 L19.9 19.9 L19.9 20.4 L19.9 20.9 L20.0 21.4 L20.3 21.9 L21.1 22.6 L21.7 23.4 L21.9 24.2 L21.8 24.9 L21.5 25.4 L21.1 26.0 L20.6 26.4 L19.9 26.7 L18.8 26.5 L17.8 26.2 L17.2 26.2 L16.7 26.3 L16.3 26.5 L15.9 26.8 L15.5 27.1 L15.2 27.7 L15.0 28.7 L14.6 29.7 L14.0 30.2 L13.4 30.4 L12.8 30.5 L12.1 30.4 L11.5 30.2 L10.9 29.7 L10.5 28.7 L10.3 27.7 L10.0 27.1 L9.6 26.8 L9.2 26.5 L8.8 26.3 L8.3 26.2 L7.7 26.2 L6.7 26.5 L5.6 26.7 L4.9 26.4 L4.4 26.0 L4.0 25.5 L3.7 24.9 L3.6 24.2 L3.8 23.4 L4.4 22.6 L5.2 21.9 L5.5 21.4 L5.6 20.9 L5.7 20.4 L5.6 19.9 L5.5 19.4 L5.2 18.9 L4.4 18.2 L3.8 17.4 L3.6 16.6 L3.7 15.9 L4.0 15.3 L4.4 14.8 L4.9 14.4 L5.6 14.1 L6.7 14.3 L7.7 14.6 L8.3 14.6 L8.8 14.5 L9.2 14.3 L9.6 14.0 L10.0 13.7 L10.3 13.1 L10.5 12.1 L10.9 11.1 L11.5 10.6 L12.1 10.4 Z"/><circle cx="12.75" cy="20.4" r="3.3"/>
<path d="M25.3 2.3 L25.7 2.3 L26.0 2.5 L26.3 2.8 L26.5 3.4 L26.6 4.0 L26.8 4.3 L27.0 4.5 L27.2 4.6 L27.4 4.7 L27.7 4.8 L28.0 4.8 L28.6 4.6 L29.2 4.4 L29.7 4.6 L29.9 4.8 L30.1 5.1 L30.3 5.4 L30.4 5.8 L30.3 6.2 L29.8 6.7 L29.4 7.1 L29.2 7.4 L29.1 7.7 L29.1 7.9 L29.1 8.1 L29.2 8.4 L29.4 8.7 L29.8 9.1 L30.3 9.6 L30.4 10.0 L30.3 10.4 L30.1 10.7 L29.9 11.0 L29.7 11.2 L29.2 11.4 L28.6 11.2 L28.0 11.0 L27.7 11.0 L27.4 11.1 L27.2 11.2 L27.0 11.3 L26.8 11.5 L26.6 11.8 L26.5 12.4 L26.3 13.0 L26.0 13.3 L25.7 13.5 L25.3 13.5 L24.9 13.5 L24.6 13.3 L24.3 13.0 L24.1 12.4 L24.0 11.8 L23.8 11.5 L23.6 11.3 L23.4 11.2 L23.2 11.1 L22.9 11.0 L22.6 11.0 L22.0 11.2 L21.4 11.4 L20.9 11.2 L20.7 11.0 L20.5 10.7 L20.3 10.4 L20.2 10.0 L20.3 9.6 L20.8 9.1 L21.2 8.7 L21.4 8.4 L21.5 8.1 L21.5 7.9 L21.5 7.7 L21.4 7.4 L21.2 7.1 L20.8 6.7 L20.3 6.2 L20.2 5.8 L20.3 5.4 L20.5 5.1 L20.7 4.8 L20.9 4.6 L21.4 4.4 L22.0 4.6 L22.6 4.8 L22.9 4.8 L23.2 4.7 L23.4 4.6 L23.6 4.5 L23.8 4.3 L24.0 4.0 L24.1 3.4 L24.3 2.8 L24.6 2.5 L24.9 2.3 Z" stroke-width="1.5"/><circle cx="25.3" cy="7.9" r="1.5" stroke-width="1.3"/>
</svg>
<svg style="left:60px;top:982px" width="40" height="40" viewBox="0 0 40 40" fill="none" stroke="#3c3c3c" stroke-width="1.8" stroke-linecap="round" stroke-linejoin="round">
<g transform="translate(19.4,18.65) rotate(42.7)">
<path d="M-9 -1.7 H9 M-9 1.7 H9"/>
<path d="M17.6 -2.3 L15 -1.2 V1.2 L17.6 2.3 A4.6 4.6 0 1 1 17.6 -2.3 Z"/>
<path d="M-17.6 2.3 L-15 1.2 V-1.2 L-17.6 -2.3 A4.6 4.6 0 1 1 -17.6 2.3 Z"/>
</g>
<g transform="translate(19.15,18.1) rotate(-43)">
<path d="M-17.5 -2.1 H-6 V2.1 H-17.5 A2.1 2.1 0 0 1 -17.5 -2.1 Z"/><path d="M-5 -3 L-3.5 0 L-5 3"/>
<path d="M-3.5 0 H9"/><path d="M9 0 Q13.5 -3.4 19 -0.6 Q19.8 0 19 0.6 Q13.5 3.4 9 0 Z"/>
</g>
</svg>

</div></body></html>
